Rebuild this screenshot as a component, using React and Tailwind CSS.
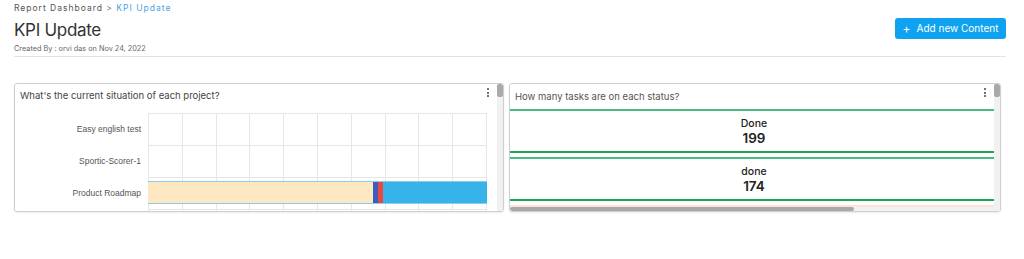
import React from "react";

const pop = { fontFamily: "Inter, 'Open Sans', sans-serif" };

function Dots() {
  return (
    <div className="flex flex-col gap-[1.5px] items-center pt-[4px] pr-[8px]">
      <span className="w-[2px] h-[2px] bg-[#444] rounded-full" />
      <span className="w-[2px] h-[2px] bg-[#444] rounded-full" />
      <span className="w-[2px] h-[2px] bg-[#444] rounded-full" />
    </div>
  );
}

function VScroll() {
  return (
    <div className="w-[6px] bg-[#f1f1f1] flex flex-col shrink-0">
      <div className="h-[13px] bg-[#a9a9a9] rounded-[2px]" />
    </div>
  );
}

const rows = ["Easy english test", "Sportic-Scorer-1", "Product Roadmap"];

function ProjectChart() {
  return (
    <div className="flex h-[98px] overflow-hidden">
      <div className="w-[133px] flex flex-col shrink-0" style={{ fontFamily: "'Liberation Sans', Arial, sans-serif" }}>
        {rows.map((r) => (
          <div key={r} className="h-[32px] flex items-center justify-end pr-[7px] text-[8.5px] text-[#555]">
            {r}
          </div>
        ))}
      </div>
      <div className="relative w-[339px] shrink-0">
        <div className="absolute inset-0 flex">
          {Array.from({ length: 10 }).map((_, i) => (
            <div key={i} className="flex-1 border-l border-[#e6e6e6]" />
          ))}
          <div className="border-l border-[#e6e6e6]" />
        </div>
        <div className="relative flex flex-col">
          <div className="h-[32px] border-t border-[#e6e6e6]" />
          <div className="h-[32px] border-t border-[#e6e6e6]" />
          <div className="h-[32px] border-t border-[#e6e6e6] pt-[3px]">
            <div className="h-[23px] flex border-y border-[#8ccaf0]">
              <div className="w-[225px] bg-[#fde8c2]" />
              <div className="w-[5px] bg-[#3d5cc2]" />
              <div className="w-[5px] bg-[#e8483e]" />
              <div className="flex-1 bg-[#36b3e8]" />
            </div>
          </div>
          <div className="h-[32px] border-t border-[#e6e6e6]" />
        </div>
      </div>
    </div>
  );
}

function StatusBlock({ label, value }) {
  return (
    <div className="h-[48px] flex flex-col">
      <div className="h-[2px] bg-[#4dbb80]" />
      <div className="flex-1 flex flex-col items-center justify-center text-[#222] pl-[4px]" style={pop}>
        <div className="text-[10.5px] font-medium leading-[13px]">{label}</div>
        <div className="text-[13.5px] font-semibold leading-[16px]">{value}</div>
      </div>
      <div className="h-[2px] bg-[#1fa653]" />
      <div className="h-[4px]" />
    </div>
  );
}

export default function App() {
  return (
    <div className="w-[1024px] h-[259px] bg-white overflow-hidden" style={pop}>
      <div className="px-[14px] flex items-start justify-between">
        <div className="flex flex-col">
          <div className="pt-[3px] text-[8.5px] tracking-[1px] leading-[11px] text-[#555]">
            Report Dashboard <span className="text-[#777]">&gt;</span>{" "}
            <span className="text-[#4aa3e0]">KPI Update</span>
          </div>
          <div className="mt-[5px] text-[17px] tracking-[-0.3px] leading-[22px] text-[#333]">KPI Update</div>
          <div className="mt-[3px] text-[7.3px] leading-[10px] text-[#666]">Created By : orvi das on Nov 24, 2022</div>
        </div>
        <button className="mt-[18px] mr-[4px] w-[111px] h-[21px] rounded-[3px] bg-[#0ea2f0] text-white text-[10px] flex items-center justify-center gap-[6px]">
          <span className="text-[12px] leading-none">+</span>
          <span>Add new Content</span>
        </button>
      </div>
      <div className="ml-[14px] mr-[18px] mt-[2px] h-px bg-[#e3e3e3]" />
      <div className="px-[14px] mt-[26px] flex gap-[5px]">
        <div className="w-[490px] h-[129px] border border-[#cfcfcf] rounded-[3px] flex overflow-hidden shadow-[0_1px_2px_rgba(0,0,0,0.08)]">
          <div className="flex-1 flex flex-col">
            <div className="h-[29px] flex justify-between">
              <div className="pl-[5px] pt-[5px] text-[9.5px] text-[#444]">What's the current situation of each project?</div>
              <Dots />
            </div>
            <ProjectChart />
          </div>
          <VScroll />
        </div>
        <div className="w-[492px] h-[129px] border border-[#cfcfcf] rounded-[3px] flex overflow-hidden shadow-[0_1px_2px_rgba(0,0,0,0.08)]">
          <div className="flex-1 flex flex-col">
            <div className="h-[25px] flex justify-between">
              <div className="pl-[5px] pt-[6px] text-[9.5px] text-[#555]">How many tasks are on each status?</div>
              <Dots />
            </div>
            <StatusBlock label="Done" value="199" />
            <StatusBlock label="done" value="174" />
            <div className="h-[2px] bg-[#fde2dd]" />
            <div className="flex-1 bg-[#f1f1f1] flex">
              <div className="w-[344px] bg-[#a9a9a9] rounded-[2px]" />
            </div>
          </div>
          <VScroll />
        </div>
      </div>
    </div>
  );
}
